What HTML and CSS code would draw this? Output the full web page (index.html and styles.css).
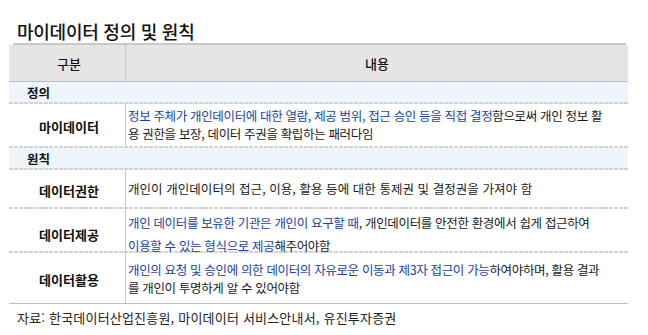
FILE: index.html
```html
<!DOCTYPE html>
<html lang="ko">
<head>
<meta charset="utf-8">
<title>마이데이터 정의 및 원칙</title>
<link rel="stylesheet" href="styles.css">
</head>
<body>
<div class="figure">
  <h2 class="title">마이데이터 정의 및 원칙</h2>
  <div class="table">
    <div class="head">
      <div class="hcell first">구분</div>
      <div class="hcell">내용</div>
    </div>
    <div class="section">정의</div>
    <div class="row r-my">
      <div class="label">마이데이터</div>
      <div class="content lh-tight"><span class="hl">정보 주체가 개인데이터에 대한 열람, 제공 범위, 접근 승인 등을 직접 결정</span>함으로써 개인 정보 활<br>용 권한을 보장, 데이터 주권을 확립하는 패러다임</div>
    </div>
    <div class="section">원칙</div>
    <div class="row r-right">
      <div class="label">데이터권한</div>
      <div class="content ls-wide">개인이 개인데이터의 접근, 이용, 활용 등에 대한 통제권 및 결정권을 가져야 함</div>
    </div>
    <div class="row r-provide">
      <div class="label">데이터제공</div>
      <div class="content lh-wide"><span class="hl">개인 데이터를 보유한 기관은 개인이 요구할 때</span>, 개인데이터를 안전한 환경에서 쉽게 접근하여<br><span class="hl">이용할 수 있는 형식으로 제공</span>해주어야함</div>
    </div>
    <div class="row r-use last">
      <div class="label">데이터활용</div>
      <div class="content lh-mid"><span class="hl">개인의 요청 및 승인에 의한 데이터의 자유로운 이동과 제3자 접근이 가능</span>하여야하며, 활용 결과<br>를 개인이 투명하게 알 수 있어야함</div>
    </div>
  </div>
  <p class="source">자료: 한국데이터산업진흥원, 마이데이터 서비스안내서, 유진투자증권</p>
</div>
</body>
</html>
```
FILE: styles.css
```css
html, body {
  margin: 0;
  padding: 0;
  background: #ffffff;
}

body {
  font-family: "Noto Sans CJK KR", "Noto Sans", sans-serif;
  color: #1e1e1e;
  width: 648px;
  height: 335px;
  overflow: hidden;
}

.figure {
  display: flex;
  flex-direction: column;
}

.title {
  margin: 0 22px 0 13px;
  padding: 20px 0 0 4px;
  font-size: 18px;
  line-height: 23px;
  font-weight: 500;
  letter-spacing: -0.25px;
  color: #111;
  border-bottom: 2px solid #c8c8c8;
}

.table {
  margin-left: 9px;
  width: 619px;
  display: flex;
  flex-direction: column;
  border-bottom: 1px solid #bdbdbd;
}

.head {
  display: grid;
  grid-template-columns: 117px 1fr;
  height: 36px;
  background: #e5e5e5;
  border-bottom: 1px solid #bdbdbd;
}

.hcell {
  display: flex;
  align-items: center;
  justify-content: center;
  font-size: 13px;
  font-weight: 500;
  color: #111;
}

.hcell.first {
  border-right: 1px solid #c8c8c8;
  padding-left: 4px;
}

.section,
.row {
  background:
    repeating-linear-gradient(90deg, #d2d2d2 0 4px, transparent 4px 5px) left bottom / 100% 2px no-repeat;
}

.section {
  height: 22px;
  box-sizing: border-box;
  padding: 0 0 2px 18px;
  display: flex;
  align-items: center;
  font-size: 12.5px;
  font-weight: 700;
  color: #111;
  background-color: #eef5fd;
}

.row {
  display: grid;
  grid-template-columns: 117px 1fr;
  box-sizing: border-box;
  padding-bottom: 2px;
}

.row.last {
  background: none;
  padding-bottom: 0;
}

.r-my { height: 44px; }
.r-right { height: 39px; }
.r-provide { height: 44px; }
.r-use { height: 50px; }

.label {
  display: flex;
  align-items: center;
  justify-content: center;
  padding: 3px 0 0 4px;
  border-right: 1px solid #c8c8c8;
  font-size: 13px;
  font-weight: 700;
  color: #111;
}

.content {
  display: block;
  align-self: center;
  padding-left: 2px;
  font-size: 12.5px;
  letter-spacing: -0.35px;
  line-height: 18px;
  white-space: nowrap;
  color: #1a1a1a;
}

.lh-tight { line-height: 18px; }
.lh-wide { line-height: 23px; padding-top: 2px; }
.lh-mid { line-height: 18px; padding-top: 2px; }
.ls-wide { letter-spacing: 0.05px; }

.hl {
  color: #2143a3;
}

.source {
  margin: 6px 0 0 17px;
  font-size: 13px;
  line-height: 16px;
  letter-spacing: 0.2px;
  color: #222;
}
```
